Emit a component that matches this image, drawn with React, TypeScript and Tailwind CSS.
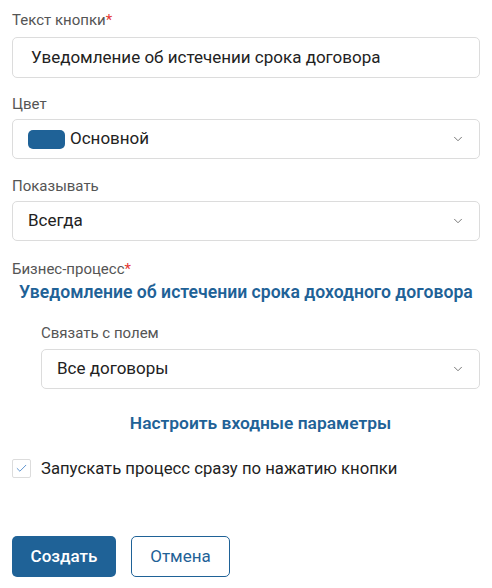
import { ChevronDown, Check } from "lucide-react";

function Label({ text, required }: { text: string; required?: boolean }) {
  return (
    <div className="text-[15px] leading-[20px] text-[#555]">
      {text}
      {required && <span className="text-[#e53935]">*</span>}
    </div>
  );
}

function Select({ children }: { children: React.ReactNode }) {
  return (
    <div className="flex h-[40px] items-center justify-between rounded-[5px] border border-[#dcdcdc] bg-white pl-[15px] pr-[14px]">
      <div className="flex items-center text-[17px] text-[#222]">{children}</div>
      <ChevronDown className="h-[14px] w-[14px] text-[#666]" strokeWidth={1.5} />
    </div>
  );
}

export default function App() {
  return (
    <div className="h-[588px] w-[492px] bg-white px-[12px] pt-[10px] font-['Roboto',sans-serif]">
      <Label text="Текст кнопки" required />
      <div className="mt-[7px] flex h-[41px] items-center rounded-[5px] border border-[#dcdcdc] px-[18px] text-[17px] text-[#222]">
        Уведомление об истечении срока договора
      </div>

      <div className="mt-[16px]">
        <Label text="Цвет" />
      </div>
      <div className="mt-[5px]">
        <Select>
          <span className="mr-[5px] h-[19px] w-[37px] rounded-[5px] bg-[#1f6297]" />
          Основной
        </Select>
      </div>

      <div className="mt-[17px]">
        <Label text="Показывать" />
      </div>
      <div className="mt-[5px]">
        <Select>Всегда</Select>
      </div>

      <div className="mt-[18px]">
        <Label text="Бизнес-процесс" required />
      </div>
      <div className="mt-[1px] pl-[7px] text-[17.6px] font-semibold leading-[24px] text-[#1f6297]">
        Уведомление об истечении срока доходного договора
      </div>

      <div className="ml-[29px] mt-[19px]">
        <Label text="Связать с полем" />
        <div className="mt-[6px]">
          <Select>Все договоры</Select>
        </div>
        <div className="mt-[21px] text-center text-[17.4px] font-semibold text-[#1f6297]">
          Настроить входные параметры
        </div>
      </div>

      <div className="mt-[20px] flex items-center gap-[10px]">
        <span className="flex h-[19px] w-[19px] items-center justify-center rounded-[2px] border border-[#dcdcdc]">
          <Check className="h-[13px] w-[13px] text-[#3b7cc4]" strokeWidth={1.5} />
        </span>
        <span className="text-[16.7px] text-[#222]">Запускать процесс сразу по нажатию кнопки</span>
      </div>

      <div className="mt-[55px] flex gap-[15px]">
        <button className="h-[41px] w-[104px] rounded-[5px] bg-[#1f6297] text-[17px] font-medium text-white">
          Создать
        </button>
        <button className="h-[41px] w-[99px] rounded-[5px] border border-[#1f6297] bg-white text-[17px] text-[#1f6297]">
          Отмена
        </button>
      </div>
    </div>
  );
}
